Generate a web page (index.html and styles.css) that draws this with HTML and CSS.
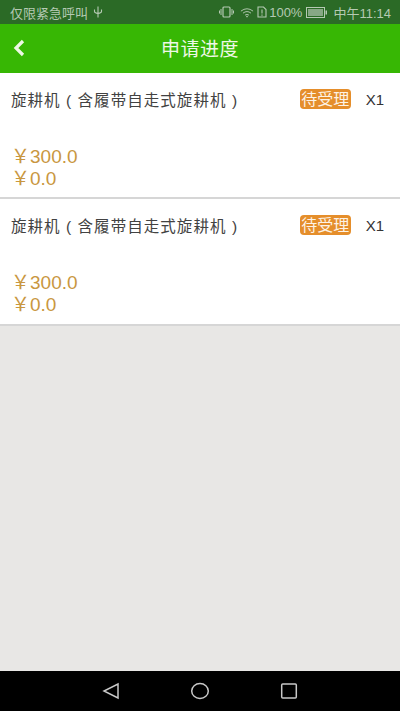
FILE: index.html
```html
<!DOCTYPE html>
<html>
<head>
    <meta charset="UTF-8">
    <title>申请进度</title>
    <link rel="stylesheet" href="styles.css">
</head>
<body>
<div class="page">
    <div class="status">
        <span class="status-left">仅限紧急呼叫
            <svg class="usb" width="10" height="12" viewBox="0 0 10 12"><path d="M5 0.5V11.5M1.5 3.5V5.5Q1.5 7 5 7.5Q8.5 7 8.5 5.5V3.5" fill="none" stroke="#b5c9b3" stroke-width="1.1"/></svg>
        </span>
        <span class="status-right">
            <svg width="15" height="12" viewBox="0 0 15 12"><rect x="4" y="1" width="7" height="10" rx="1" fill="none" stroke="#b5c9b3" stroke-width="1.2"/><path d="M2 3V9M13 3V9M0.5 4.5V7.5M14.5 4.5V7.5" stroke="#b5c9b3" stroke-width="1"/></svg>
            <svg class="wifi" width="14" height="11" viewBox="0 0 15 11"><path d="M1 4Q7.5 -1 14 4M3.2 6.2Q7.5 2.8 11.8 6.2M5.4 8.3Q7.5 6.8 9.6 8.3" fill="none" stroke="#b5c9b3" stroke-width="1"/><circle cx="7.5" cy="9.8" r="0.9" fill="#b5c9b3"/></svg>
            <svg width="10" height="12" viewBox="0 0 10 12"><path d="M1 1H6.5L9 3.5V11H1Z" fill="none" stroke="#b5c9b3" stroke-width="1.1"/><path d="M5 3.5V7.5M5 8.5V9.8" stroke="#b5c9b3" stroke-width="1.1"/></svg>
            <span class="pct">100%</span>
            <svg width="21" height="11" viewBox="0 0 21 11"><rect x="0.5" y="0.5" width="18" height="10" fill="none" stroke="#b5c9b3"/><rect x="2" y="2" width="15" height="7" fill="#87a885"/><rect x="19.5" y="3.5" width="1.5" height="4" fill="#b5c9b3"/></svg>
            <span class="time">中午11:14</span>
        </span>
    </div>
    <div class="title-bar">
        <svg class="back" width="14" height="18" viewBox="0 0 14 18"><path d="M11 2L4 9L11 16" fill="none" stroke="#eef8e6" stroke-width="3.2"/></svg>
        <span class="title">申请进度</span>
    </div>
    <div class="list">
        <div class="item">
            <div class="item-top">
                <span class="name">旋耕机 ( 含履带自走式旋耕机 )</span>
                <span class="tag">待受理</span>
                <span class="count">X1</span>
            </div>
            <div class="price">￥300.0</div>
            <div class="price">￥0.0</div>
        </div>
        <div class="item">
            <div class="item-top">
                <span class="name">旋耕机 ( 含履带自走式旋耕机 )</span>
                <span class="tag">待受理</span>
                <span class="count">X1</span>
            </div>
            <div class="price">￥300.0</div>
            <div class="price">￥0.0</div>
        </div>
    </div>
    <div class="empty"></div>
    <div class="nav">
        <svg width="18" height="18" viewBox="0 0 18 18"><path d="M16 2V16L2 9Z" fill="none" stroke="#c8c8c8" stroke-width="1.5"/></svg>
        <svg width="20" height="18" viewBox="0 0 20 18"><ellipse cx="10" cy="9" rx="8.3" ry="7.5" fill="none" stroke="#c8c8c8" stroke-width="1.5"/></svg>
        <svg width="18" height="18" viewBox="0 0 18 18"><rect x="1.7" y="2" width="14.6" height="14" rx="1" fill="none" stroke="#c8c8c8" stroke-width="1.5"/></svg>
    </div>
</div>
</body>
</html>
```

FILE: styles.css
```css
* {
    margin: 0;
    padding: 0;
    box-sizing: border-box;
}

body {
    font-family: "Liberation Sans", "Noto Sans CJK SC", sans-serif;
    color: #424242;
}

.page {
    display: flex;
    flex-direction: column;
    width: 400px;
    height: 711px;
    background: #e8e7e5;
}

.status {
    display: flex;
    justify-content: space-between;
    align-items: center;
    flex: none;
    height: 24px;
    padding: 0 9px 0 10px;
    background: #2b6a26;
    color: #b5c9b3;
    font-size: 13px;
}

.status-left {
    display: flex;
    align-items: center;
    gap: 5px;
}

.status-right {
    display: flex;
    align-items: center;
    gap: 3px;
}

.wifi {
    margin-left: 3px;
}

.pct {
    margin: 0 1px 0 -1px;
}

.time {
    margin-left: 3px;
}

.title-bar {
    position: relative;
    display: flex;
    justify-content: center;
    align-items: center;
    flex: none;
    height: 49px;
    padding-bottom: 2px;
    background: #37b704;
}

.back {
    position: absolute;
    left: 12px;
    top: 15px;
}

.title {
    color: #eef8e6;
    font-size: 19px;
    letter-spacing: 0.5px;
}

.item {
    height: 126.4px;
    padding: 14px 16px 0 11px;
    background: #fff;
    border-bottom: 2px solid #d6d6d6;
}

.item-top {
    display: flex;
    align-items: center;
    height: 24px;
    margin-bottom: 34.5px;
}

.name {
    flex: 1;
    font-size: 15.5px;
    letter-spacing: 1.05px;
    white-space: nowrap;
}

.tag {
    width: 51px;
    height: 20px;
    margin-right: 15px;
    border-radius: 4px;
    background: #e58e2b;
    color: #fdf3e6;
    font-size: 16px;
    line-height: 21px;
    text-align: center;
    white-space: nowrap;
}

.count {
    font-size: 15px;
    color: #333;
}

.price {
    height: 22.5px;
    color: #c9973f;
    font-size: 19px;
    line-height: 22.5px;
}

.empty {
    flex: 1;
}

.nav {
    display: flex;
    justify-content: space-between;
    align-items: center;
    flex: none;
    height: 40px;
    padding: 0 102px;
    background: #000;
}
```
